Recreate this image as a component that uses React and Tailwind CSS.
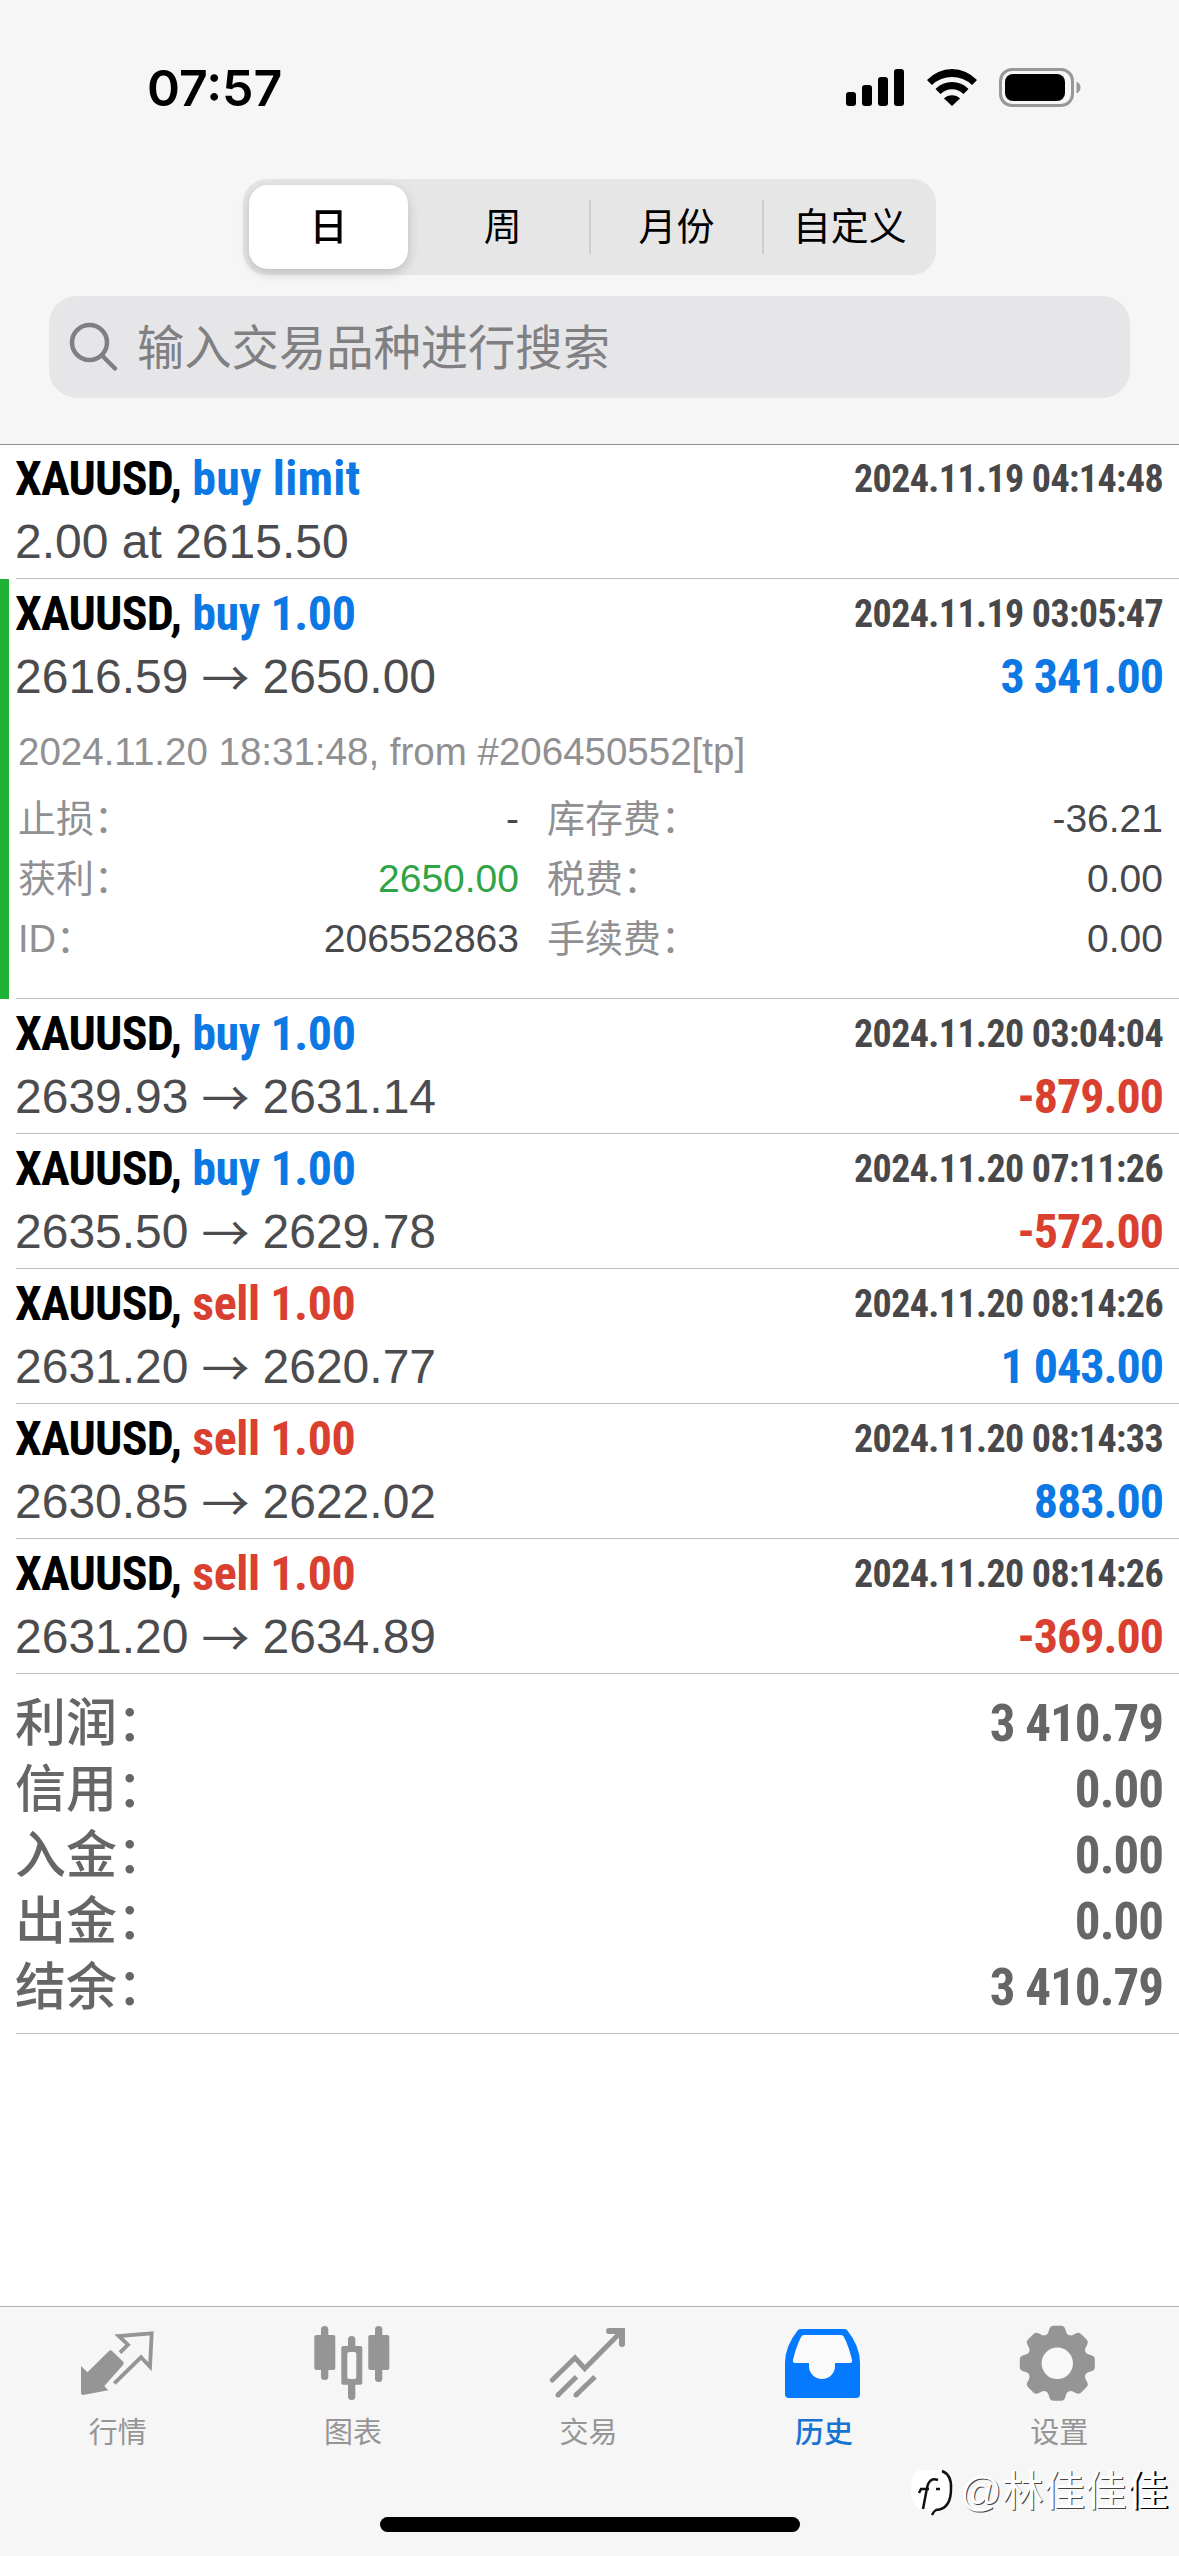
import { useState } from "react";
import clsx from "clsx";

const trades = [
  { side: "buy", label: "buy limit", time: "2024.11.19 04:14:48", open: "2.00 at 2615.50" },
  {
    side: "buy", label: "buy 1.00", time: "2024.11.19 03:05:47", open: "2616.59", close: "2650.00", profit: "3 341.00",
    note: "2024.11.20 18:31:48, from #206450552[tp]",
    details: [
      ["止损：", "-", "库存费：", "-36.21"],
      ["获利：", "2650.00", "税费：", "0.00"],
      ["ID：", "206552863", "手续费：", "0.00"],
    ],
  },
  { side: "buy", label: "buy 1.00", time: "2024.11.20 03:04:04", open: "2639.93", close: "2631.14", profit: "-879.00" },
  { side: "buy", label: "buy 1.00", time: "2024.11.20 07:11:26", open: "2635.50", close: "2629.78", profit: "-572.00" },
  { side: "sell", label: "sell 1.00", time: "2024.11.20 08:14:26", open: "2631.20", close: "2620.77", profit: "1 043.00" },
  { side: "sell", label: "sell 1.00", time: "2024.11.20 08:14:33", open: "2630.85", close: "2622.02", profit: "883.00" },
  { side: "sell", label: "sell 1.00", time: "2024.11.20 08:14:26", open: "2631.20", close: "2634.89", profit: "-369.00" },
];

const totals = [
  ["利润：", "3 410.79"],
  ["信用：", "0.00"],
  ["入金：", "0.00"],
  ["出金：", "0.00"],
  ["结余：", "3 410.79"],
];

const periods = ["日", "周", "月份", "自定义"];

function StatusBar() {
  return <div className="flex h-[179px] items-start justify-between pl-[147px] pr-[98px] pt-[60px]">
    <span className="font-['Inter',sans-serif] text-[50px] font-semibold leading-[56px]">07:57</span>
    <div className="flex items-center gap-[22px] pt-[8px]">
      <svg width="59" height="39" viewBox="0 0 59 39">
        <rect x="0" y="24" width="10" height="14" rx="3" />
        <rect x="16" y="17" width="10" height="21" rx="3" />
        <rect x="32" y="9" width="10" height="29" rx="3" />
        <rect x="48" y="1" width="10" height="37" rx="3" />
      </svg>
      <svg width="50" height="39" viewBox="0 -1 50 39">
        <path d="M0 11A34 34 0 0 1 50 11L45 16A29 29 0 0 0 5 16Z" />
        <path d="M8.5 20A23 23 0 0 1 41.5 20L36.5 25A16.5 16.5 0 0 0 13.5 25Z" />
        <path d="M17 29.5A11.5 11.5 0 0 1 33 29.5L25 37Z" />
      </svg>
      <svg width="82" height="39" viewBox="0 0 82 39">
        <rect x="1.5" y="1.5" width="72" height="36" rx="11.5" fill="none" stroke="#979797" strokeWidth="3" />
        <rect x="6" y="6" width="60" height="27" rx="8" />
        <path d="M77.5 13.5Q81.5 15.5 81.5 19.5T77.5 25.5Z" fill="#979797" />
      </svg>
    </div>
  </div>;
}

function PeriodPicker() {
  const [active, setActive] = useState(0);
  return <div className="mx-auto grid h-[96px] w-[693px] grid-cols-4 rounded-[24px] bg-[#e6e6e6]">
    {periods.map((name, i) => <button
      key={name}
      onClick={() => setActive(i)}
      className="flex items-center text-[38px]"
    >
      {i > 1 && <span className="-ml-[1px] h-[54px] w-[2px] bg-[#cfcfcf]" />}
      <span className={clsx(
        "flex flex-1 items-center justify-center pt-[1px]",
        i === active && "ml-[6px] mr-[8px] h-[84px] rounded-[19px] bg-white font-medium shadow-[0_4px_12px_rgba(0,0,0,0.18)]",
      )}>{name}</span>
    </button>)}
  </div>;
}

function SearchBox() {
  return <div className="mx-[49px] mt-[21px] flex h-[102px] items-center rounded-[28px] bg-[#e6e6e8] pl-[20px]">
    <svg width="50" height="50" viewBox="0 0 50 50" fill="none" stroke="#808083" strokeWidth="4.5" strokeLinecap="round">
      <circle cx="20.5" cy="20.5" r="17.5" />
      <path d="M33 33.5L46 46.5" />
    </svg>
    <span className="ml-[18px] pt-[5px] text-[47.3px] text-[#808083]">输入交易品种进行搜索</span>
  </div>;
}

function TradeRow({ trade }) {
  const { side, label, time, open, close, profit, note, details } = trade;
  return <div className={clsx("border-l-[9px] pl-[7px]", details ? "border-[#1fb335]" : "border-transparent")}>
    <div className={clsx(
      "border-b border-[#bcbcbe] pr-[16px]",
      details ? "h-[420px] pt-[7px]" : close ? "h-[135px] pt-[7px]" : "h-[134px] pt-[6px]",
    )}>
      <div className="flex justify-between font-['Roboto_Condensed',sans-serif] font-bold leading-[56px]">
        <p className="-ml-[1px] flex text-[48px]">
          <span className="tracking-[-0.8px]">XAUUSD,</span>
          <span className={clsx(
            "ml-[11px]",
            side === "buy" ? "text-[#0c78e4]" : "text-[#d9402f]",
            close ? "tracking-[-0.4px]" : "tracking-[0.2px]",
          )}>{label}</span>
        </p>
        <p className="text-[38px] tracking-[-0.6px] text-[#48484a]">{time}</p>
      </div>
      <div className="mt-[4px] flex justify-between leading-[62px] text-[#4c4c4e]">
        <p className="-ml-[1px] flex text-[48px]">
          <span>{open}</span>
          {close && <span className="ml-[12px] mr-[12px] h-[60px] w-[50px] -translate-y-[2px] text-center font-['Noto_Sans_CJK_SC',sans-serif]">→</span>}
          <span>{close}</span>
        </p>
        {profit && <p className={clsx(
          "font-['Roboto_Condensed',sans-serif] text-[48px] font-bold tracking-[-1px]",
          profit.startsWith("-") ? "text-[#d9402f]" : "text-[#0c78e4]",
        )}>{profit}</p>}
      </div>
      {details && <div className="pl-[2px] text-[38px] text-[#909092]">
        <p className="mt-[20px] text-[38.5px] leading-[48px]">{note}</p>
        <div className="mt-[13px] leading-[60px]">
          {details.map(([l1, v1, l2, v2], i) => <div key={l1} className="flex">
            <span>{l1}</span>
            <span className={clsx("ml-auto text-[39px]", i === 1 ? "text-[#2fa446]" : "text-[#48484a]")}>{v1}</span>
            <div className="ml-[28px] flex w-[616px] justify-between">
              <span>{l2}</span>
              <span className="text-[39px] text-[#48484a]">{v2}</span>
            </div>
          </div>)}
        </div>
      </div>}
    </div>
  </div>;
}

function QuotesIcon() {
  return <svg width="86" height="84" viewBox="0 0 86 84">
    <path d="M6 46L12.5 52.3L34 31Q35.5 29.5 37 31L48 41.5Q49.5 43.3 48 45L29.3 66L33.3 70.3L8 75Q6 75 6 73Z" fill="currentColor" />
    <path d="M45 32.7L53 24.7L43.7 16L76.7 13.3L75 46.7L66 37.3L39.3 63.3" fill="none" stroke="currentColor" strokeWidth="3.8" />
  </svg>;
}

function ChartIcon() {
  return <svg width="86" height="84" viewBox="0 0 86 84" fill="currentColor">
    <rect x="11" y="6" width="7.3" height="54" rx="3.5" />
    <rect x="4.3" y="15" width="21" height="35" rx="2" />
    <rect x="65" y="6" width="7.3" height="56" rx="3.5" />
    <rect x="58.3" y="15" width="21" height="35" rx="2" />
    <rect x="38" y="16" width="7.3" height="64" rx="3.5" />
    <rect x="31.3" y="26" width="21" height="38.7" rx="2" />
    <rect x="37.3" y="32" width="9" height="27" rx="2" fill="#f8f8f8" />
  </svg>;
}

function TradeIcon() {
  return <svg width="86" height="84" viewBox="0 0 86 84" fill="none" stroke="currentColor" strokeWidth="5">
    <path d="M7.3 60L30 37.8L39.7 48.5L76 12" strokeLinecap="round" />
    <path d="M64 11H77V24" strokeWidth="6" strokeLinecap="round" />
    <path d="M68 11L77 20V11Z" fill="currentColor" stroke="none" />
    <path d="M13 75L31.5 56.7M31 75L50 56.7" />
    <circle cx="13" cy="75" r="2.5" fill="currentColor" stroke="none" />
    <circle cx="31" cy="75" r="2.5" fill="currentColor" stroke="none" />
  </svg>;
}

function HistoryIcon() {
  return <svg width="86" height="84" viewBox="0 0 86 84">
    <path d="M17 10Q18 9 20 9H63Q65 9 66 10Q79 26 79 43V74Q79 78 75 78H8Q4 78 4 74V43Q4 26 17 10Z" fill="currentColor" />
    <path d="M23 15H60Q62 15 63 17Q68 27 71 40Q71.5 43 69 43H54V46A13 13 0 0 1 28 46V43H14Q11.5 43 12 40Q15 27 20 17Q21 15 23 15Z" fill="#fafafa" />
  </svg>;
}

function SettingsIcon() {
  return <svg width="86" height="84" viewBox="0 0 86 84" fill="currentColor">
    <g transform="translate(41.3 43.3)">
      <circle r="30.5" />
      {[0, 45, 90, 135, 180, 225, 270, 315].map((a) => <path
        key={a}
        transform={`rotate(${a})`}
        d="M-13 -26Q-9 -29 -8 -34Q-7 -37.5 -4 -37.5H4Q7 -37.5 8 -34Q9 -29 13 -26Z"
      />)}
      <circle r="15.7" fill="#f8f8f8" />
    </g>
  </svg>;
}

const tabs = [
  { name: "行情", Icon: QuotesIcon },
  { name: "图表", Icon: ChartIcon },
  { name: "交易", Icon: TradeIcon },
  { name: "历史", Icon: HistoryIcon },
  { name: "设置", Icon: SettingsIcon },
];

function TabBar() {
  const [active, setActive] = useState("历史");
  return <nav className="relative flex h-[250px] flex-col border-t border-[#b2b2b4] bg-[#f6f6f6]">
    <div className="grid grid-cols-5 pr-[2px] pt-[13px]">
      {tabs.map(({ name, Icon }) => <button
        key={name}
        onClick={() => setActive(name)}
        className={clsx("flex flex-col items-center", name === active ? "text-[#057aff]" : "text-[#959595]")}
      >
        <Icon />
        <span className={clsx("mt-[9px] text-[29px] leading-[40px]", name === active && "font-medium text-[#1673d2]")}>{name}</span>
      </button>)}
    </div>
    <div className="mx-auto mb-[24px] mt-auto h-[15px] w-[420px] rounded-full bg-black" />
    <div className="absolute bottom-[39px] right-[11px] flex items-center gap-[6px]">
      <svg width="44" height="48" viewBox="0 0 44 48">
        <path d="M10 2H30Q42 3 42 20Q42 42 22 47V43Q0 44 1 22Q1 5 10 2Z" fill="#ffffff" />
        <path d="M32 3Q42 7 41 21Q41 41 26 42Q24 43 22 47" fill="none" stroke="#111111" strokeWidth="2.5" />
        <path d="M28 12Q19 9 17 20L13 41M9 25L11 21H19M26 21H30" fill="none" stroke="#111111" strokeWidth="2.5" />
      </svg>
      <span className="text-[41.5px] leading-[50px] text-white [text-shadow:1px_1px_0_#444]">
        @林佳佳<span className="[text-shadow:2px_1px_0_#000]">佳</span>
      </span>
    </div>
  </nav>;
}

export default function App() {
  return <div className="flex h-[2556px] w-[1179px] flex-col bg-white font-['Liberation_Sans','Noto_Sans_CJK_SC',sans-serif] text-black">
    <header className="h-[445px] border-b border-[#8e8e90] bg-[#f6f6f6]">
      <StatusBar />
      <PeriodPicker />
      <SearchBox />
    </header>
    <main className="flex-1">
      {trades.map((trade, i) => <TradeRow key={i} trade={trade} />)}
      <div className="ml-[16px] h-[360px] border-b border-[#bcbcbe] pr-[16px] pt-[17px] text-[51px] leading-[66px] text-[#666668]">
        {totals.map(([label, value]) => <div key={label} className="flex justify-between">
          <span className="-ml-[1px] font-medium">{label}</span>
          <span className="font-['Roboto_Condensed',sans-serif] font-bold tracking-[-1px]">{value}</span>
        </div>)}
      </div>
    </main>
    <TabBar />
  </div>;
}
